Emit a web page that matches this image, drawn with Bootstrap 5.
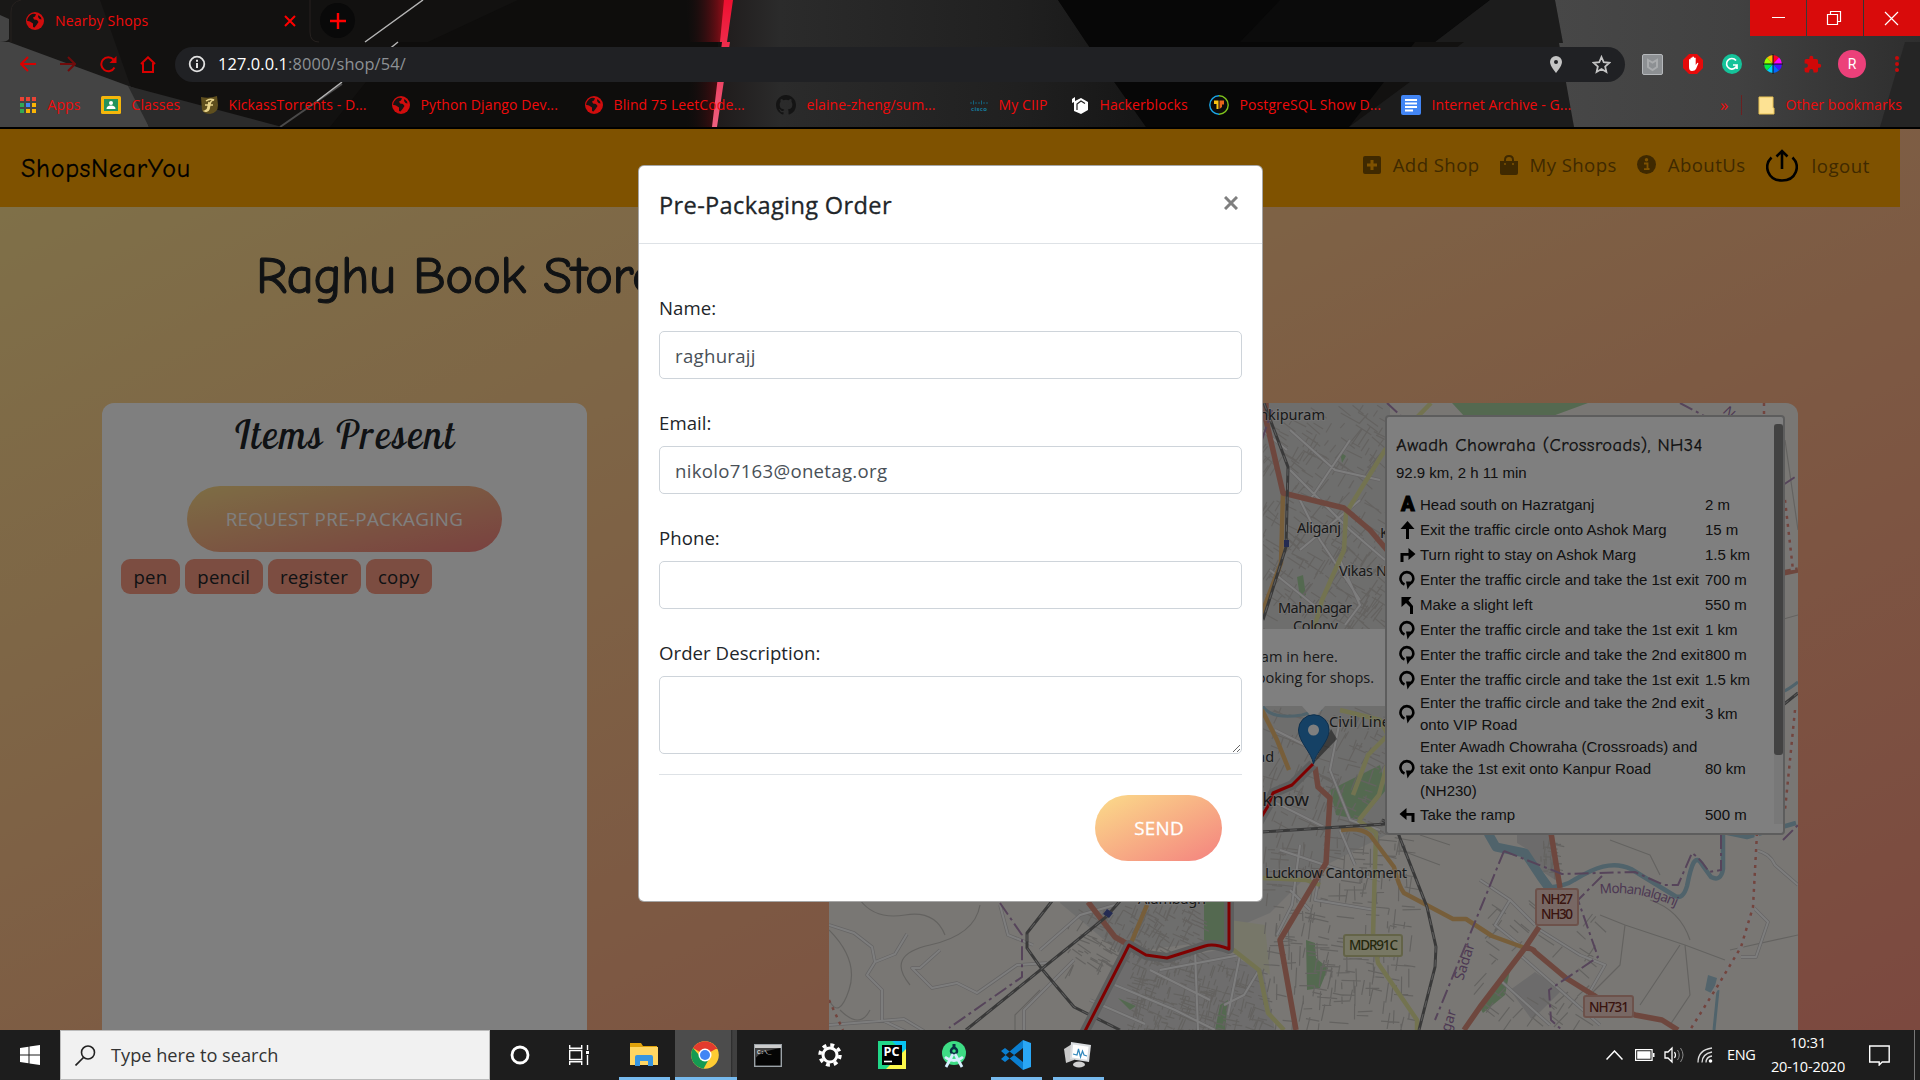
<!DOCTYPE html>
<html lang="en">
<head>
<meta charset="utf-8">
<title>Nearby Shops</title>
<link href="https://cdn.jsdelivr.net/npm/bootstrap@5.3.0/dist/css/bootstrap.min.css" rel="stylesheet">
<style>
html{font-size:20px}
body{font-family:"Segoe UI","Open Sans","Noto Sans",sans-serif;font-size:18.6px;line-height:30px;width:1920px;height:1080px;overflow:hidden;color:#212529}
svg{display:block;flex:none}
.comic{font-family:"Comic Sans MS","Comic Neue",Lato,sans-serif}
/* browser frame */
.chrome-frame{height:129px;background:#121110;border-bottom:2px solid #000;font-size:14px;line-height:20px;letter-spacing:.1px;color:#f00b0b;white-space:nowrap}
.frame-art{left:0;top:0}
.tabstrip{height:42px}
.tab-active{width:312px;padding:0 16px 0 26px;height:42px;gap:11px;letter-spacing:.2px}
.new-tab{width:35px;height:35px;background:#090909;margin-left:8px;margin-top:3px}
.win-btn{width:56px;height:36px;background:#d90b0b}
.toolbar{height:44px;padding-left:20px}
.nav-ico{width:40px}
.nav-ico.home{width:35px}
.omnibox{width:1450px;height:35px;background:#202124;color:#8d9195;padding:0 14px 0 13px;font-size:16.4px;letter-spacing:.1px}
.omnibox .url{padding-left:12px}
.omnibox b{color:#fff;font-weight:400}
.ext-row{display:grid;grid-template-columns:41px 39px 41px 40px 42px 46px 20px;margin-left:17px}
.avatar{width:28px;height:28px;background:#ec407a;line-height:28px;margin-left:-7px;font-family:Roboto,sans-serif}
.bookmarks{display:grid;grid-template-columns:81px 99px 192px 193px 191px 194px 102px 137px 192px 319px 38px 150px;padding-left:20px;height:38px}
.bookmarks>div{display:flex;align-items:center;gap:10.5px}
.bookmarks .more{font-size:17px;gap:12px}
.vline{width:1px;height:20px;background:#6b2020}
/* web page */
.site{height:901px;background:linear-gradient(to bottom right,#ffe492,#f8927f)}
.site-nav{width:1900px;height:78px;background:#ffa500;padding:0 30px 0 21px}
.site-nav .brand{font-size:26px;letter-spacing:.7px;color:#000;-webkit-text-stroke:.3px #000;padding-top:2px}
.site-nav .lnk{color:#7f5300;display:flex;align-items:center;gap:12px;letter-spacing:.42px}
.site-nav .lnk.out{gap:14px;padding-top:3px;letter-spacing:.55px}
.nav-links{gap:20px;margin-top:-7px}
.shop-title{font-size:53px;line-height:62px;letter-spacing:-.45px;-webkit-text-stroke:1.1px #212529;padding:38px 0 0 256px;height:196px;margin:0;font-weight:400}
.cols{padding-left:102px;gap:242px}
.items{width:485px;height:700px;background:#fff;border-radius:12px;padding:10px 19px}
.script-head{font-family:"Satisfy","Lobster Two","Liberation Serif",serif;font-style:italic;font-size:39px;line-height:44px;letter-spacing:2.2px;text-align:center;margin:0 0 29px;font-weight:400}
.btn-grad{background:linear-gradient(to bottom right,#fbdc8a,#f4827f);border:0;color:#fff;border-radius:33px;height:66px;padding:0 39px;font-size:18.8px;letter-spacing:.33px;line-height:66px}
.btn-grad.send{-webkit-text-stroke:.3px #fff;padding:0 38px 0 39px}
.tags{gap:5px;padding-top:7px}
.tagx{background:#f89b83;border-radius:9px;padding:0 12.5px;height:35px;line-height:35px;letter-spacing:.2px}
.mapbox{width:969px;height:640px;border-radius:12px;overflow:hidden}
.map-pop{left:380px;top:226px;width:208px;height:77px;background:#fff;font-size:14.6px;line-height:21px;padding:17px 0 0 44px;color:#333;white-space:nowrap}
.map-pop .cls{right:18px;top:4px;font:bold 20px/20px "Liberation Sans",sans-serif;color:#c3c3c3}
.route-panel{left:556px;top:12px;width:400px;height:420px;background:#fff;border:2px solid #bbb;border-radius:4px;font:15px/22px "Liberation Sans",Arial,sans-serif;padding:16px 0 0 9px;color:#222}
.route-panel h2{font-size:18.5px;line-height:24px;letter-spacing:.38px;-webkit-text-stroke:.25px #222;margin:0 0 5px;font-weight:400}
.route-panel table{margin-top:8px;width:364px;table-layout:fixed;border-collapse:collapse}
.route-panel td{padding:0;vertical-align:middle;white-space:nowrap}
.route-panel tr.one{height:25px}
.route-panel td svg{margin-left:3px}
.route-panel td b{font:900 20px/22px Roboto,sans-serif;-webkit-text-stroke:1px #000;padding-left:5px;color:#000}
.thumb{right:0;top:7px;width:9px;height:331px;background:#848484;border-radius:3px}
.track{right:0;top:7px;width:9px;height:400px;background:#f1f1f1}
.dim{background:rgba(0,0,0,.5)}
/* order dialog */
.modal-dialog.order{width:625px;max-width:625px;margin:0;position:absolute;left:638px;top:36px}
.order .modal-content{height:737px;background:#fff;border-radius:6px;border:1px solid rgba(0,0,0,.35)}
.order .modal-header{height:78px;padding:20px;border-bottom:1px solid #dee2e6;display:flex;align-items:center;justify-content:space-between}
.order .modal-title{font-size:23.6px;line-height:38px;letter-spacing:.35px;font-weight:500;-webkit-text-stroke:.3px #212529;color:#212529}
.order .modal-header svg{margin:-4px 4px 0 0}
.order .modal-body{padding:49px 20px 0;color:#212529}
.order label{display:block;margin-bottom:8px;letter-spacing:.05px}
.order .form-control{font-size:18.6px;line-height:30px;height:48px;padding:8px 15px;border:1px solid #ced4da;border-radius:5px;color:#495057;margin-bottom:29px;letter-spacing:.3px}
.order textarea.form-control{height:78px;margin-bottom:20px}
.order .foot{border-top:1px solid #dee2e6;padding:20px 20px 0;text-align:right}
/* taskbar */
.taskbar{height:50px;background:#1d1d1d;color:#fff;font-size:14.5px}
.start{width:60px;padding-left:20px}
.search{width:430px;height:50px;background:#f1f1f1;border:1px solid #bbb;color:#333;font-size:18.2px;padding-left:14px;gap:15px}
.tb{width:62px;height:50px;display:flex;align-items:center;justify-content:center}
.tb.run{background:linear-gradient(#76b9ed,#76b9ed) bottom/51px 3px no-repeat}
.tb.act{background:linear-gradient(#76b9ed,#76b9ed) bottom/100% 3px no-repeat,linear-gradient(90deg,#4c4c4c 56px,#2a2a2a 56px,#404040 58px)}
.tb.act svg{margin-left:-2px}
.tray{margin-right:5px}
.lang{width:29px;letter-spacing:-.3px}
.clock{line-height:24px;text-align:center;width:92px;margin:0 15px 0 6px;letter-spacing:-.15px}
.edge{width:1px;height:50px;background:#777}
</style>
<script src="https://cdn.jsdelivr.net/npm/bootstrap@5.3.0/dist/js/bootstrap.bundle.min.js"></script>
</head>
<body>
<svg width="0" height="0" class="position-absolute">
<defs>
<symbol id="globe" viewBox="0 0 18 18"><circle cx="9" cy="9" r="9" fill="#d00d0d"/><path d="M4 3.200q3-2 6-1l-1 2.300-2 1 1 2 3 .5 1.500 2-2 3-2 2.500-1.500-.5v-3.500l-3-2-3-.8Q1.500 5.500 4 3.200M12.500 3l2.500 2.500.5 2-2-.5-1.500-2z" fill="#161313"/></symbol>
<symbol id="round" viewBox="0 0 16 20"><path d="M5 14.500A6.400 6.400 0 1 1 10 14.400" fill="none" stroke="#000" stroke-width="2.600"/><path d="M6.500 11.500h6.500L8 19.500z"/></symbol>
<symbol id="up" viewBox="0 0 16 20"><path d="M8 1l7 8H9.500v10h-3V9H1z"/></symbol>
<symbol id="right" viewBox="0 0 16 20"><path d="M9 3l7 6-7 6v-4.200H4V17H1V8h8z"/></symbol>
<symbol id="left" viewBox="0 0 16 20"><path d="M7 3L0 9l7 6v-4.200h5V17h3V8H7z"/></symbol>
<symbol id="slight" viewBox="0 0 16 20"><path d="M2 2h10L9 5.500l4.500 5.500v8h-3v-7L6.500 8 2 12z"/></symbol>
</defs>
</svg>

<header class="chrome-frame position-relative overflow-hidden">
<svg class="frame-art position-absolute" width="1920" height="127">
<defs>
<linearGradient id="g1"><stop offset="0" stop-color="#1f1b1b"/><stop offset=".15" stop-color="#2b2b2b"/><stop offset=".7" stop-color="#202020"/><stop offset="1" stop-color="#161616"/></linearGradient>
<linearGradient id="g2"><stop offset="0" stop-color="#121110" stop-opacity="0"/><stop offset="1" stop-color="#a30c18"/></linearGradient>
<linearGradient id="g3"><stop offset="0" stop-color="#474747"/><stop offset=".5" stop-color="#414141"/><stop offset="1" stop-color="#2e2e2e"/></linearGradient>
<linearGradient id="g4" x2="0" y2="1"><stop offset="0" stop-color="#ee1030"/><stop offset="1" stop-color="#ee6080"/></linearGradient>
</defs>
<rect width="1920" height="127" fill="#121110"/>
<path d="M0 0h100l45 127H0z" fill="#191817"/>
<path d="M0 15l9 4v20q-2 3-9 3zM0 42l9 0 125 46 15 39H0z" fill="#444"/>
<path d="M128 86l154 41H149z" fill="#2b2b2b"/>
<path d="M342 84l-62 43" stroke="#4a4a4a" stroke-width="2"/>
<path d="M330 127l68-85h30l90-42h200v127z" fill="#0e0d0c"/>
<path d="M423 0l-58 42M398 42l-16 13M342 82l-25 19" stroke="#b5b5b5" stroke-width="1.500"/>
<path d="M730 0h328l28 42 60 85H716z" fill="url(#g1)"/>
<path d="M685 0h42l-5 42h-32z" fill="url(#g2)"/><path d="M690 82h28l-4 45h-28z" fill="url(#g2)" opacity=".4"/>
<path d="M724 0h9l-6 42h-7zM722 42h8l-7 45-6 40h-5z" fill="url(#g4)"/>
<path d="M1058 0h432l-55 42h-20l-66 85h-203l-60-85z" fill="#070707"/>
<path d="M1280 0h210l-55 42H1240z" fill="#0b0b0b"/>
<path d="M1490 0h65l8 42 11 85h-225l115-85h-29z" fill="#1c1c1c"/>
<path d="M1555 0h365v127h-346l-15-84h4z" fill="url(#g3)"/>
<path d="M1905 42h15v85h-40z" fill="#252525"/>
<path d="M11 42V12Q11 2 21 0M310 0v32q0 10 9 10" stroke="#26211f" fill="none"/>
</svg>
<div class="tabstrip d-flex position-relative">
<div class="tab-active d-flex align-items-center">
<svg width="18" height="18"><use href="#globe"/></svg><span class="flex-grow-1">Nearby Shops</span>
<svg width="12" height="12"><path d="M1 1l10 10M11 1L1 11" stroke="#f00" stroke-width="2"/></svg>
</div>
<div class="new-tab rounded-circle d-flex align-items-center justify-content-center"><svg width="16" height="16"><path d="M8 0v16M0 8h16" stroke="#f00" stroke-width="2.400"/></svg></div>
<div class="d-flex ms-auto" style="gap:1px">
<div class="win-btn"><svg width="56" height="36"><path d="M22 17.500h13" stroke="#fff"/></svg></div>
<div class="win-btn"><svg width="56" height="36"><path d="M20.500 14.500h10v10h-10zM23.500 14v-2.500h10v10H31" fill="none" stroke="#fff" stroke-width="1.200"/></svg></div>
<div class="win-btn"><svg width="56" height="36"><path d="M21 12l13 13M34 12L21 25" stroke="#fff" stroke-width="1.200"/></svg></div>
</div>
</div>
<div class="toolbar d-flex align-items-center position-relative">
<div class="nav-ico"><svg width="16" height="16"><path d="M16 8H1.500M8 1L1 8l7 7" fill="none" stroke="#d80000" stroke-width="2"/></svg></div>
<div class="nav-ico"><svg width="16" height="16"><path d="M0 8h14.500M8 1l7 7-7 7" fill="none" stroke="#700b0b" stroke-width="2"/></svg></div>
<div class="nav-ico"><svg width="17" height="17"><path d="M14.500 11.500A7 7 0 1 1 13.500 3.500" fill="none" stroke="#d80000" stroke-width="2"/><path d="M16.500 0v7h-7z" fill="#d80000"/></svg></div>
<div class="nav-ico home"><svg width="16" height="17"><path d="M1 8L8 1.300 15 8M3 7v9h10V7" fill="none" stroke="#d80000" stroke-width="2"/></svg></div>
<div class="omnibox rounded-pill d-flex align-items-center">
<svg width="18" height="18"><circle cx="9" cy="9" r="7.300" fill="none" stroke="#e2e2e2" stroke-width="1.800"/><path d="M9 8v5M9 4.700v2" stroke="#e2e2e2" stroke-width="2"/></svg>
<span class="url flex-grow-1"><b>127.0.0.1</b>:8000/shop/54/</span>
<svg width="12" height="17" viewBox="0 0 12 17"><path d="M6 0a6 6 0 0 1 6 6c0 4-6 11-6 11S0 10 0 6a6 6 0 0 1 6-6" fill="#c4c4c4"/><circle cx="6" cy="6" r="2" fill="#202124"/></svg>
<svg class="ms-4" width="19" height="19" viewBox="0 0 24 24"><path d="M12 2.500l2.800 6.600 7.200.7-5.400 4.700 1.600 7L12 17.800 5.800 21.500l1.600-7L2 9.800l7.200-.7z" fill="none" stroke="#c4c4c4" stroke-width="2.200"/></svg>
</div>
<div class="ext-row align-items-center">
<svg width="21" height="21"><rect x=".5" y=".5" width="20" height="20" rx="1.500" fill="#8d9093" stroke="#b5b8bb"/><path d="M6 6l4.500 2.500L15 6v7l-4.500 3L6 13z" fill="none" stroke="#a9abad" stroke-width="2"/></svg>
<svg width="20" height="20"><path d="M6 0h8l6 6v8l-6 6H6l-6-6V6z" fill="#e60a0a"/><path d="M6 10V5.500q1-1 1.500 0V4q1-1 1.700 0V3q1-1 1.800 0v1q1-1 1.700 0v7l1.500-2q1.500-.5 1 .8L13 15q-1 2-4 2-3 0-3-4z" fill="#fff"/></svg>
<svg width="20" height="20"><circle cx="10" cy="10" r="10" fill="#15c39a"/><path d="M14 6.500A5.300 5.300 0 1 0 15 11h-4m4 0v4" fill="none" stroke="#fff" stroke-width="1.700"/></svg>
<svg width="20" height="20"><path d="M10 10V1a9 9 0 0 1 6 2.500z" fill="#f02"/><path d="M10 10l6-6.500A9 9 0 0 1 19 10z" fill="#f0f"/><path d="M10 10h9a9 9 0 0 1-3 6.500z" fill="#41f"/><path d="M10 10l6 6.500A9 9 0 0 1 10 19z" fill="#06f"/><path d="M10 10v9a9 9 0 0 1-6-2.500z" fill="#0cf"/><path d="M10 10l-6 6.500A9 9 0 0 1 1 10z" fill="#0e4"/><path d="M10 10H1a9 9 0 0 1 3-6.500z" fill="#9f0"/><path d="M10 10L4 3.500A9 9 0 0 1 10 1z" fill="#fb0"/><path d="M10 0v20M0 10h20" stroke="#111"/></svg>
<svg width="19" height="19" viewBox="0 0 24 24"><path d="M20.500 11H19V7a2 2 0 0 0-2-2h-4V3.500a2.500 2.500 0 0 0-5 0V5H4a2 2 0 0 0-2 2v3.800h1.500a2.700 2.700 0 0 1 0 5.400H2V20a2 2 0 0 0 2 2h3.800v-1.500a2.700 2.700 0 0 1 5.400 0V22H17a2 2 0 0 0 2-2v-4h1.500a2.500 2.500 0 0 0 0-5" fill="#d00808"/></svg>
<div class="avatar rounded-circle text-white text-center">R</div>
<svg width="20" height="18"><g fill="#c80a0a"><circle cx="6" cy="3" r="2"/><circle cx="6" cy="9" r="2"/><circle cx="6" cy="15" r="2"/></g></svg>
</div>
</div>
<div class="bookmarks position-relative">
<div><svg width="17" height="17"><path d="M0 0h4v4H0zM6 0h4v4H6zM12 0h4v4h-4z" fill="#ea4335"/><path d="M0 6h4v4H0zM0 12h4v4H0z" fill="#34a853"/><path d="M6 6h4v4H6z" fill="#4285f4"/><path d="M12 6h4v4h-4zM6 12h4v4H6zM12 12h4v4h-4z" fill="#fbb505"/></svg>Apps</div>
<div><svg width="20" height="18"><rect width="20" height="18" rx="1.500" fill="#f4b60b"/><rect x="3" y="3" width="14" height="12" fill="#23935b"/><circle cx="10" cy="7" r="2" fill="#fff"/><path d="M5.500 13q0-3.500 4.500-3.500t4.500 3.500z" fill="#fff"/></svg>Classes</div>
<div><svg width="18" height="18"><path d="M1 1q8 2 16-1l1 9q0 8-8 9-6 0-8-4z" fill="#5f4f1e"/><path d="M6 5q4-3 8-1-3 0-4 4l-1 5q-1 3-4 2 3-1 3-4l1-5M5 9h8" stroke="#e8d48a" stroke-width="1.500" fill="none"/></svg>KickassTorrents - D...</div>
<div><svg width="18" height="18"><use href="#globe"/></svg>Python Django Dev...</div>
<div><svg width="18" height="18"><use href="#globe"/></svg>Blind 75 LeetCode...</div>
<div><svg width="20" height="20" viewBox="0 0 16 16"><path fill="#141414" d="M8 0C3.580 0 0 3.580 0 8c0 3.540 2.290 6.530 5.470 7.590.4.070.55-.17.55-.38v-1.490c-2.010.37-2.530-.49-2.690-.94-.09-.23-.48-.94-.82-1.130-.28-.15-.68-.52-.01-.53.63-.01 1.080.58 1.230.82.72 1.210 1.870.87 2.330.66.070-.52.28-.87.51-1.070-1.780-.2-3.640-.89-3.640-3.950 0-.87.31-1.590.82-2.150-.08-.2-.36-1.020.080-2.120 0 0 .67-.21 2.200.82a7.600 7.600 0 0 1 4 0c1.530-1.040 2.200-.82 2.200-.82.44 1.100.16 1.920.080 2.120.51.56.82 1.270.82 2.150 0 3.070-1.870 3.750-3.650 3.950.29.25.54.73.54 1.480v2.200c0 .21.15.46.55.38A8 8 0 0 0 16 8c0-4.420-3.580-8-8-8"/></svg>elaine-zheng/sum...</div>
<div><svg width="18" height="13"><path d="M1 3v2M3.500 1.500v4M6 3v2M9 3v2M11.500 1.500v4M14 3v2M17 3v2" stroke="#13637d"/><text x="1" y="12" font-size="6" font-weight="700" fill="#177a9a" textLength="16">cisco</text></svg>My CIIP</div>
<div><svg width="17" height="18"><path d="M3 1v4l6-3 7 4v8l-7 4-7-3V6l-2 1V3z" fill="#fff"/><path d="M5 14V8l4-3 4 2.500" stroke="#222" stroke-width="1.200" fill="none"/></svg>Hackerblocks</div>
<div><svg width="20" height="20"><circle cx="10" cy="10" r="9.500" fill="#0c0c0c"/><path d="M10 .8a9.200 9.200 0 0 0 0 18.400" fill="none" stroke="#1aa6e8" stroke-width="1.400"/><path d="M10 .8a9.200 9.200 0 0 1 0 18.400" fill="none" stroke="#7fc41c" stroke-width="1.400"/><path d="M5 5.500h4.500v8.500H7.500V9H5z" fill="#fbc312"/><path d="M10.500 5.500H15v4h-2V12l-2.500 2z" fill="#e8661b"/></svg>PostgreSQL Show D...</div>
<div><svg width="20" height="20"><rect width="20" height="20" rx="2" fill="#4285f4"/><path d="M4 5h12M4 8.500h12M4 12h12M4 15.500h8" stroke="#fff" stroke-width="2"/></svg>Internet Archive - G...</div>
<div class="more">»<span class="vline"></span></div>
<div><svg width="17" height="19"><path d="M1 1h14v11h1v6H1z" fill="#fde293" stroke="#e8c254"/></svg>Other bookmarks</div>
</div>
</header>

<main class="site position-relative overflow-hidden">
<nav class="site-nav d-flex align-items-center">
<span class="brand comic">ShopsNearYou</span>
<div class="nav-links d-flex ms-auto align-items-center">
<span class="lnk"><svg width="18" height="18"><rect width="18" height="18" rx="2" fill="#7f5300"/><path d="M9 4v10M4 9h10" stroke="#ffa500" stroke-width="3"/></svg>Add Shop</span>
<span class="lnk"><svg width="18" height="20"><path d="M0 6h18v12q0 2-2 2H2q-2 0-2-2z" fill="#7f5300"/><path d="M5 9V5q0-4 4-4t4 4v4" fill="none" stroke="#7f5300" stroke-width="2"/><circle cx="5" cy="9" r="1" fill="#ffa500"/><circle cx="13" cy="9" r="1" fill="#ffa500"/></svg>My Shops</span>
<span class="lnk"><svg width="19" height="19"><circle cx="9.500" cy="9.500" r="9.500" fill="#7f5300"/><path d="M7 8.500h3.500v5.500h2M7 14.200h5.500" stroke="#ffa500" stroke-width="1.800" fill="none"/><circle cx="9.500" cy="4.800" r="1.700" fill="#ffa500"/></svg>AboutUs</span>
<span class="lnk out"><svg width="32" height="34"><path d="M5.500 8.500C-3 17 2 31.500 16 31.500S35 17 26.500 8.500" fill="none" stroke="#000" stroke-width="2.600"/><path d="M16 20V3M10.500 7.500L16 2l5.500 5.500" fill="none" stroke="#000" stroke-width="2.600"/></svg>logout</span>
</div>
</nav>
<h1 class="shop-title comic">Raghu Book Store</h1>
<div class="cols d-flex">
<section class="items">
<h3 class="script-head">Items Present</h3>
<div class="text-center"><button class="btn-grad">REQUEST PRE-PACKAGING</button></div>
<div class="tags d-flex"><span class="tagx">pen</span><span class="tagx">pencil</span><span class="tagx">register</span><span class="tagx">copy</span></div>
</section>

<section class="mapbox position-relative">
<svg width="969" height="627" viewBox="829 403 969 627" fill="none" stroke-linejoin="round" font-family="Noto Sans, sans-serif">
<rect x="829" y="403" width="969" height="640" fill="#f2efe9"/>
<path d="M1200 403h190v430l-40 20-40 20-40 40-70 30-80 10-60-50z" fill="#dddcdb"/>
<path d="M1130 948l28 14 60-12 45 20 12 60h-190z" fill="#dcdbdb"/>
<path d="M1540 833h14l3 48-16-10-14-22-10-6v-10zM1510 990l25-18 27 18-30 30z" fill="#d8d7d6"/>
<path d="M1230 920l35 5 5 50-35-25z" fill="#eeeed2"/>
<g fill="#a9d3a1"><path d="M1452 403h136l-38 14h-85z"/><path d="M1306 940l9 3 1 15 12 10-8 20-13 2z"/><path d="M1480 1008l30-38-5 25-22 18z"/><path d="M1330 790l50-25 6 25-25 30-25-5z"/><path d="M1204 901h20v44l-20-4zM1118 998l18 8-6 4zM1220 1005l8-5-3 30h-10z"/><path d="M1336 665l8-3v10h-8zM1297 577l6-2 3 20-6 3zM1340 452l6 4-4 7z"/></g>
<g id="streets" stroke="#c8c5c0" stroke-width="1.200"></g>
<g stroke="#cdcaca" stroke-width="3.500"><path id="wr" d="M829 925l25 8 18 14 3 15-8 13 15 15v30l25 12M875 962l20-8 12-20M940 950l-20 18-8 0 20 20 25-5 20 10 40-28 30-2M1000 905l8 30 25 10M1040 950l40-35 35-10M829 1025l75-6 20 12M1074 960l-50 50v20M1160 970l80-15-12 60M1115 985l60 25 40 20M1150 970l60 30M1195 950l3 80M1259 970l-15 25-20 10M1090 1000l55 24M1300 845l-8 60-15 30M1340 830l15 35M1280 850l60 20 40 10M1320 870l-5 30 60 10M1310 910l-20-20M1480 880l30 20-15 25 25 20M1510 900l25 25M1540 930l40 25 25 10-20 35M1520 955l80 70M1500 980l50 45M1755 850q15 3 20 15l23 20M1753 907l15 15-12 35-15 0M1290 430l45 40 45 10M1300 500l20 40 40 60M1290 470l60 60 35 30M1350 440l-40 60M1300 550l60-50M1270 570l50 40M1340 560l20 45-15 20M1262 430l25 20M1275 730l40 20M1340 720l-10 50 20 50 30 10M1270 800l60 30"/><use href="#wr" stroke="#fbfbfb" stroke-width="2"/></g>
<g stroke="#a0c6d6"><path stroke-width="9" d="M1488 833l8 14 29 6 16 24 8 11"/><path stroke-width="4.500" d="M1546 888q20-2 28-8c20-12 38-20 57-11l44 27q8 4 12-10c4-20 8-35 16-20l8 11q10 5 12-8v-37l24 5 49-14"/><path d="M1440 833h-30l-20-8M1262 705q8 15 40 10l20-6M1798 682q-10 8-16 10M1714 1030l4-40" stroke-width="3"/></g>
<path d="M1708 975l9 3-4 16-8-4z" fill="#a6c9d8"/>
<g stroke="#e6e7a0" stroke-width="4.500"><path d="M1358 820l18 13-3 100 5 30 39 57v10M1231 948l28 22 9 43 16 17M1263 878l43 2 14 5M1431 403l-46 47-39 63-2 37-22 50-8 29M1387 765l-8 30-20 25M1340 710l40 10 8 15-20 20-15 40"/></g>
<g stroke="#eebd75" stroke-width="4.500"><path d="M1341 830q20-3 29 5l24 32q5 20 10 26l49 26h13l26 17 33 12M1283 493l-2 70-19 50M1262 710l15 30 12 30M1147 905l-16 38"/></g>
<g stroke="#dd8f7d" stroke-width="5.500"><path d="M1266 403v17l17 73 61 15 26 22 17 20M1315 767l3 20 12 11-4 65-46 77 16 90M1551 833l9 55M1539 927l-14 21-45 59-16 23M1525 948q8 0 10 4l31 26 32 20 37 17 27 5 16 10M1088 902l27 35 14 8M1783 573l15-3"/></g>
<g stroke="#737373" stroke-width="3"><path id="rl" d="M1052 901l-25 32v15l14 20 33 39 46 23M1120 901l-14 16-140 113M1262 832l124-8M1382 820q10 4 16 13l29 74 9 40-1 20-16 63M1264 403l24 64-2 80-23 73M1783 705l15-12"/><use href="#rl" stroke="#bbb" stroke-width="1" stroke-dasharray="7 7"/></g>
<g stroke="#ac89b4" stroke-width="2" stroke-dasharray="14 4 3 4"><path d="M1000 903l22 32v42l-73 51M1504 851l-69 169M1504 851l58 23 73-2 29 13h14l14-32q8 5 17 19l12-2v-37M1602 876l-24 24 20 57-49 33 2 30 11 10M1387 403l15 14M1680 403l30 16M1783 485l15-10M1262 440l10-30M1783 840l15-15"/></g>
<path d="M1757 833l-4 74-12 40-24 40-27 43M1764 403v14M1785 500l8 70M1795 710l-10 100" stroke="#f3eeee" stroke-width="4.500"/><path d="M1757 833l-4 74-12 40-24 40-27 43M829 1000l14 30M1764 403v14M1785 500l8 70M1795 710l-10 100" stroke="#e58a7c" stroke-width="2.500" stroke-dasharray="3 5"/>
<path d="M1313 764l-21 21-19 8-5 13-12 20v70h-27v53q-15-6-24-3l-38 12-21-3-17-10-5 10-41 80" stroke="#bcbcbc" stroke-width="10"/>
<path d="M1313 764l-21 21-19 8-5 13-12 20v70h-27v53q-15-6-24-3l-38 12-21-3-17-10-5 10-41 80" stroke="#ff0000" stroke-width="3"/>
<path d="M1103 914l4-5 6 4-4 5zM1284 540h5v7h-5z" fill="#4857a5"/>
<g fill="#333" font-size="14.500" stroke="#fff" stroke-opacity=".4" stroke-width="2" paint-order="stroke">
<text x="1325" y="420" text-anchor="end" textLength="78">Jankipuram</text><text x="1297" y="533" textLength="44">Aliganj</text><text x="1339" y="576" textLength="78">Vikas Nagar</text><text x="1380" y="538">K</text><text x="1278" y="613" textLength="74">Mahanagar</text><text x="1293" y="631" textLength="45">Colony</text><text x="1329" y="727" textLength="68">Civil Lines</text><text x="1257" y="762">ad</text><text x="1309" y="806" text-anchor="end" font-size="18.500">Lucknow</text><text x="1265" y="878" textLength="142">Lucknow Cantonment</text><text x="1138" y="904" textLength="68">Alambagh</text>
</g>
<g fill="#9a72a6" font-size="14"><path id="mohan" fill="none" d="M1600 894q50-6 100 26"/><text font-size="13.500"><textPath href="#mohan" textLength="78">Mohanlalganj</textPath></text><text transform="translate(1463 981) rotate(-72)">Sadar</text><text transform="translate(1444 1050) rotate(-72)">Nagar</text><text transform="translate(1722 412) rotate(45)">Na</text></g>
<g stroke-width="2"><rect x="1536" y="889" width="42" height="36" rx="2" fill="#f0d0c8" stroke="#dba497"/><rect x="1584" y="996" width="49" height="21" rx="2" fill="#f0d0c8" stroke="#dba497"/><rect x="1344" y="935" width="58" height="21" rx="2" fill="#f1f0c9" stroke="#c9c990"/></g>
<g font-size="13.500" font-weight="500" fill="#73291c"><text x="1541" y="904" textLength="32">NH27</text><text x="1541" y="919" textLength="32">NH30</text><text x="1589" y="1012" textLength="40">NH731</text><text x="1349" y="950" fill="#4b501b" textLength="49">MDR91C</text></g>
<path d="M1302 706h23l-11.500 13z" fill="#fff"/>
<path d="M1313 764l24-25-6-10z" fill="#000" opacity=".45"/>
<path d="M1313.500 764c-2-12-15-22-15-34a15.300 15.300 0 0 1 30.600 0c0 12-13.600 22-15.600 34" fill="#2b83cb" stroke="#1d5f99"/><circle cx="1313.500" cy="730" r="5.500" fill="#fff"/>
</svg>
<div class="map-pop position-absolute">I am in here.<br>looking for shops.<span class="cls position-absolute">×</span></div>
<div class="route-panel position-absolute">
<h2 class="comic">Awadh Chowraha (Crossroads), NH34</h2>
<div>92.9 km, 2 h 11 min</div>
<table id="route"><colgroup><col style="width:24px"><col style="width:285px"><col></colgroup><tbody></tbody></table>
<div class="track position-absolute"></div><div class="thumb position-absolute"></div>
</div>
</section>
</div>

<div class="dim position-absolute top-0 start-0 w-100 h-100"></div>
<div class="modal-dialog order">
<div class="modal-content">
<div class="modal-header"><h5 class="modal-title m-0">Pre-Packaging Order</h5><svg width="14" height="14"><path d="M1 1l12 12M13 1L1 13" stroke="#7f7f7f" stroke-width="3"/></svg></div>
<form class="modal-body">
<label>Name:</label><input class="form-control" value="raghurajj">
<label>Email:</label><input class="form-control" value="nikolo7163@onetag.org">
<label>Phone:</label><input class="form-control">
<label>Order Description:</label><textarea class="form-control"></textarea>
<div class="foot"><button type="button" class="btn-grad send">SEND</button></div>
</form>
</div>
</div>
</main>

<footer class="taskbar d-flex align-items-center">
<div class="start"><svg width="20" height="20"><path d="M0 3l8.500-1.200v7.700H0zM9.500 1.600L20 0v9.500H9.500zM0 10.500h8.500v7.700L0 17zM9.500 10.500H20V20L9.500 18.400z" fill="#fff"/></svg></div>
<div class="search d-flex align-items-center"><svg width="21" height="21"><circle cx="13" cy="7.500" r="6.500" fill="none" stroke="#222" stroke-width="1.600"/><path d="M8.500 12.500L.5 20.500" stroke="#222" stroke-width="1.700"/></svg>Type here to search</div>
<div class="tb" style="width:60px"><svg width="20" height="20"><circle cx="10" cy="10" r="8" fill="none" stroke="#fff" stroke-width="2.800"/></svg></div>
<div class="tb" style="width:63px"><svg class="me-1" width="20" height="20"><path d="M.7 0v3.300h12V0M.7 20v-3.300h12V20M.7 5.500h12v9H.7zM18.500 0v5M18.500 10v10" fill="none" stroke="#fff" stroke-width="1.400"/><path d="M17 6h3v3h-3z" fill="#fff"/></svg></div>
<div class="tb run"><svg width="28" height="24"><path d="M0 0h11l2 3h14v19H0z" fill="#e0a20b"/><path d="M0 4h28v18H0z" fill="#ffd662"/><path d="M5 23V14q0-2 2-2h14q2 0 2 2v9h-5v-5h-8v5z" fill="#3795e0"/></svg></div>
<div class="tb act"><svg width="28" height="28" viewBox="0 0 28 28"><circle cx="14" cy="14" r="13.800" fill="#fc3"/><path d="M14 14L2 7A14 14 0 0 1 26 7.300z" fill="#e33b2e"/><path d="M14 14H8L2 7a14 14 0 0 0 10.500 20.800l6-10.800z" fill="#159a52"/><path d="M14 7.500h12.200" stroke="#e33b2e"/><circle cx="14" cy="14" r="6.500" fill="#fff"/><circle cx="14" cy="14" r="5" fill="#4285f4"/></svg></div>
<div class="tb"><svg width="28" height="23"><rect x=".7" y=".7" width="26.600" height="21.600" fill="#050505" stroke="#9ba2a7" stroke-width="1.400"/><path d="M1 1h26v3H1z" fill="#ccc"/><path d="M1 4h26Q6 7 1 15z" fill="#444"/><text x="3" y="10" font-size="6" fill="#fff" font-family="Liberation Mono">C:\_</text></svg></div>
<div class="tb"><svg width="24" height="24"><circle cx="12" cy="12" r="7" fill="none" stroke="#fff" stroke-width="3"/><circle cx="12" cy="12" r="10" fill="none" stroke="#fff" stroke-width="3.500" stroke-dasharray="3.900 3.950"/></svg></div>
<div class="tb"><svg width="28" height="28"><path d="M0 0h28v28H0z" fill="#21d789"/><path d="M14 0h14v14z" fill="#07c3f2"/><path d="M28 8v20H8z" fill="#fcf84a"/><path d="M4 4h20v20H4z"/><text x="5.500" y="15" font-size="11.500" font-weight="700" fill="#fff" font-family="Open Sans" textLength="16" lengthAdjust="spacingAndGlyphs">PC</text><path d="M6 20.500h8" stroke="#fff" stroke-width="1.600"/></svg></div>
<div class="tb"><svg width="24" height="28"><circle cx="12" cy="12" r="12" fill="#3ddc84"/><circle cx="12" cy="10" r="3" fill="none" stroke="#073042" stroke-width="2.500"/><path d="M12 3v4" stroke="#073042" stroke-width="3"/><path d="M11 13L4 26M13 13l7 13M3 16q9 7 18 0" fill="none" stroke="#d7effe" stroke-width="2.800"/></svg></div>
<div class="tb run"><svg width="30" height="30"><path d="M22 0v8L4 22l-4-3zM22 30v-8L4 8l-4 3z" fill="#0b7fd0"/><path d="M22 0l8 3v24l-8 3z" fill="#2aa7f5"/></svg></div>
<div class="tb run"><svg width="28" height="26"><path d="M0 7l8-5 2 16-8 3z" fill="#c9c9c9"/><path d="M7 0l20 3-2 17-19-3z" fill="#d9dcdf"/><path d="M9 2.500l15.500 2.300-1.500 13L8 15.500z" fill="#fff"/><path d="M9 12l4 1 1.500-6 2 8 2-6 1.500 4 3 1" stroke="#3489bd" fill="none" stroke-width="1.200"/><ellipse cx="15" cy="22.500" rx="6" ry="3" fill="#d0d0d0"/></svg></div>
<div class="tray d-flex align-items-center ms-auto">
<svg width="17" height="10" style="margin-right:12px"><path d="M.5 9.500L8.500 1l8 8.500" fill="none" stroke="#fff" stroke-width="1.500"/></svg>
<svg width="20" height="12" style="margin-right:9px"><path d="M.6.6h16.500v10.800H.6z" fill="none" stroke="#fff" stroke-width="1.200"/><path d="M2.200 2.200h13.300v7.600H2.200zM18 4h1.500v4H18z" fill="#fff"/></svg>
<svg width="21" height="18" style="margin-right:12px"><path d="M1 6h3l4-4v14l-4-4H1z" fill="none" stroke="#fff" stroke-width="1.300"/><path d="M10.500 6q2 3 0 6" stroke="#fff" fill="none" stroke-width="1.200"/><path d="M13.500 4q3.500 5 0 10M16.500 2q5 7 0 14" stroke="#8a8a8a" fill="none"/></svg>
<svg width="16" height="16" style="margin-right:14px"><path d="M1 15.500Q1 3 15 1M5 15.500Q5 7 15 5M9 15.500Q9 10 15 9" fill="none" stroke="#ddd" stroke-width="1.300"/><circle cx="13.500" cy="14" r="1.800" fill="#fff"/></svg>
<span class="lang">ENG</span>
<div class="clock">10:31<br>20-10-2020</div>
<svg width="21" height="21" style="margin-right:24px"><path d="M.7 1h19.500v16h-7l-3 3v-3H.7z" fill="none" stroke="#fff" stroke-width="1.400"/></svg>
<span class="edge"></span>
</div>
</footer>
<script>
const steps=[["A","Head south on Hazratganj","2 m"],["up","Exit the traffic circle onto Ashok Marg","15 m"],["right","Turn right to stay on Ashok Marg","1.5 km"],["round","Enter the traffic circle and take the 1st exit","700 m"],["slight","Make a slight left","550 m"],["round","Enter the traffic circle and take the 1st exit","1 km"],["round","Enter the traffic circle and take the 2nd exit","800 m"],["round","Enter the traffic circle and take the 1st exit","1.5 km"],["round","Enter the traffic circle and take the 2nd exit<br>onto VIP Road","3 km"],["round","Enter Awadh Chowraha (Crossroads) and<br>take the 1st exit onto Kanpur Road<br>(NH230)","80 km"],["left","Take the ramp","500 m"]];
document.querySelector("#route tbody").innerHTML=steps.map(([i,t,d])=>`<tr class="${t.includes("<br>")?"multi":"one"}"><td>${i==="A"?"<b>A</b>":`<svg width="17" height="20"><use href="#${i}"/></svg>`}</td><td>${t}</td><td>${d}</td></tr>`).join("");
// minor streets: seeded clusters of short, mostly orthogonal segments
let s=7;const r=()=>(s=(s*16807)%2147483647)/2147483647;
let d="";
const cluster=(x,y,w,h,n,a,l)=>{for(let i=0;i<n;i++){const px=x+r()*w,py=y+r()*h,t=a+(r()<.5?0:Math.PI/2)+(r()-.5)*.3,k=l*(.4+r());d+=`M${px.toFixed(1)} ${py.toFixed(1)}l${(Math.cos(t)*k).toFixed(1)} ${(Math.sin(t)*k).toFixed(1)}`}};
cluster(1262,405,125,225,300,.6,16);cluster(1262,705,125,130,150,.4,15);cluster(1262,835,150,190,240,.1,15);cluster(1070,905,130,60,170,.5,12);cluster(1125,960,140,70,240,.3,12);cluster(1480,900,120,125,60,.7,15);cluster(1540,835,15,40,30,.1,9);
d+="M829 930q30 30 20 60t-20 10M860 900q15 20 45 15t40 20M980 905q-5 30-50 40t-20 40M1040 990l-25 25v15M840 1010q20 20 30 0M1600 915l25 10-5 40-30 30M1625 925l60 20 40 15M1680 945l-40 60M1685 945l5 50-20 30M1610 840l40 15 10 20M1730 950l68-15M1650 900q30 10 40 40M1785 440l13 90M1780 620l18-5M1400 850l40 15M1420 835l30 10";
document.getElementById("streets").innerHTML=`<path d="${d}"/>`;
</script>
</body>
</html>
